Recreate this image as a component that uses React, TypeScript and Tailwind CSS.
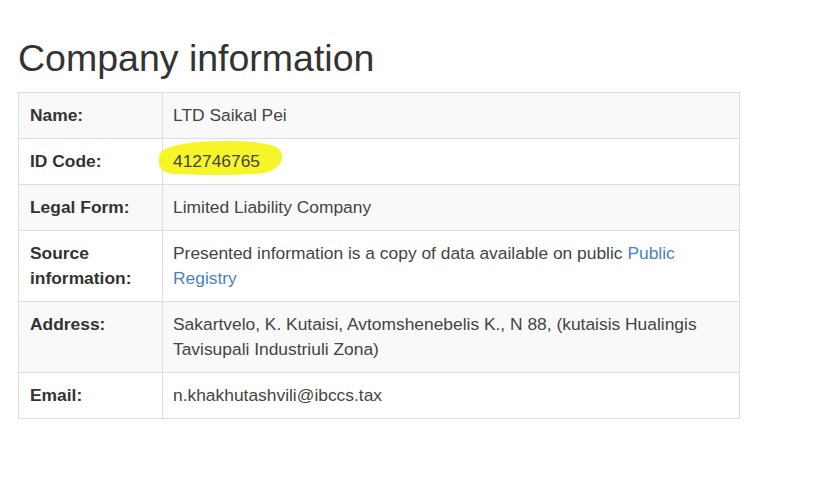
function Highlight({ children }: { children: React.ReactNode }) {
  return (
    <span className="relative inline-block">
      <svg
        className="absolute left-[-17px] top-[-10px] h-[38px] w-[130px]"
        viewBox="0 0 130 38"
        aria-hidden
      >
        <path
          d="M5 13 C14 5 40 2 70 2 C95 2 118 4 124 11 C129 19 125 30 108 34 C80 37 45 36 20 35 C8 34 3 30 3 24 C3 19 3 15 5 13 Z"
          fill="#f5f528"
        />
      </svg>
      <span className="relative">{children}</span>
    </span>
  )
}

export default function App() {
  const data = [
    { label: 'Name:', value: 'LTD Saikal Pei' },
    { label: 'ID Code:', value: <Highlight>412746765</Highlight> },
    { label: 'Legal Form:', value: 'Limited Liability Company' },
    {
      label: 'Source information:',
      value: (
        <>
          Presented information is a copy of data available on public{' '}
          <a href="#" className="text-[#4a83c0]">
            Public Registry
          </a>
        </>
      ),
    },
    {
      label: 'Address:',
      value: 'Sakartvelo, K. Kutaisi, Avtomshenebelis K., N 88, (kutaisis Hualingis Tavisupali Industriuli Zona)',
    },
    { label: 'Email:', value: 'n.khakhutashvili@ibccs.tax' },
  ]

  return (
    <div className="min-h-screen bg-white pl-[18px] pt-[38px] font-['Liberation_Sans',Arial,sans-serif] text-[#333]">
      <h1 className="text-[37.5px] leading-[1.1] font-normal text-[#333]">Company information</h1>
      <table className="mt-[13px] w-[722px] border-collapse border border-[#dddddd] text-[17.4px] leading-[25px]">
        <tbody>
          {data.map((r, i) => (
            <tr key={r.label} className={i % 2 === 0 ? 'bg-[#f9f9f9]' : 'bg-white'}>
              <th className="w-[144px] border border-[#dddddd] px-[11px] py-[10px] text-left align-top font-bold text-[#333]">
                {r.label}
              </th>
              <td className="border border-[#dddddd] px-[10px] py-[10px] align-top text-[#444]">{r.value}</td>
            </tr>
          ))}
        </tbody>
      </table>
    </div>
  )
}
